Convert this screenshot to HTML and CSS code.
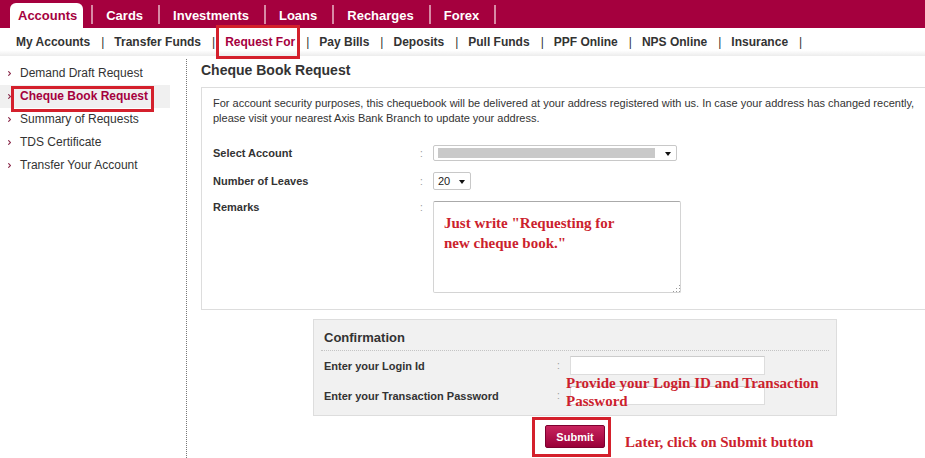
FILE: index.html
```html
<!DOCTYPE html>
<html>
<head>
<meta charset="utf-8">
<title>Cheque Book Request</title>
<link rel="stylesheet" href="styles.css">
</head>
<body>
<div class="topbar">
  <div class="tab active">Accounts</div>
  <div class="sep"></div>
  <div class="tab">Cards</div>
  <div class="sep"></div>
  <div class="tab">Investments</div>
  <div class="sep"></div>
  <div class="tab">Loans</div>
  <div class="sep"></div>
  <div class="tab">Recharges</div>
  <div class="sep"></div>
  <div class="tab">Forex</div>
  <div class="sep"></div>
</div>
<div class="subnav">
  <span class="sub">My Accounts</span><span class="bar">|</span>
  <span class="sub">Transfer Funds</span><span class="bar">|</span>
  <span class="sub current">Request For</span><span class="bar">|</span>
  <span class="sub">Pay Bills</span><span class="bar">|</span>
  <span class="sub">Deposits</span><span class="bar">|</span>
  <span class="sub">Pull Funds</span><span class="bar">|</span>
  <span class="sub">PPF Online</span><span class="bar">|</span>
  <span class="sub">NPS Online</span><span class="bar">|</span>
  <span class="sub">Insurance</span><span class="bar">|</span>
</div>
<div class="page">
  <ul class="side">
    <li class="side-item"><svg class="chev" width="3" height="5" viewBox="0 0 3 5"><path d="M0.3 0.3 L2.5 2.5 L0.3 4.7" fill="none" stroke="#8a2a4a" stroke-width="1.1"/></svg>Demand Draft Request</li>
    <li class="side-item on"><svg class="chev" width="3" height="5" viewBox="0 0 3 5"><path d="M0.3 0.3 L2.5 2.5 L0.3 4.7" fill="none" stroke="#8a2a4a" stroke-width="1.1"/></svg>Cheque Book Request</li>
    <li class="side-item"><svg class="chev" width="3" height="5" viewBox="0 0 3 5"><path d="M0.3 0.3 L2.5 2.5 L0.3 4.7" fill="none" stroke="#8a2a4a" stroke-width="1.1"/></svg>Summary of Requests</li>
    <li class="side-item"><svg class="chev" width="3" height="5" viewBox="0 0 3 5"><path d="M0.3 0.3 L2.5 2.5 L0.3 4.7" fill="none" stroke="#8a2a4a" stroke-width="1.1"/></svg>TDS Certificate</li>
    <li class="side-item"><svg class="chev" width="3" height="5" viewBox="0 0 3 5"><path d="M0.3 0.3 L2.5 2.5 L0.3 4.7" fill="none" stroke="#8a2a4a" stroke-width="1.1"/></svg>Transfer Your Account</li>
  </ul>
  <div class="main">
    <h1 class="title">Cheque Book Request</h1>
    <div class="box">
      <p class="note">For account security purposes, this chequebook will be delivered at your address registered with us. In case your address has changed recently, please visit your nearest Axis Bank Branch to update your address.</p>
      <div class="form">
        <div class="lbl">Select Account</div><div class="colon">:</div>
        <div class="sel sel-acc"><span class="masked"></span><span class="arrow"></span></div>
        <div class="lbl">Number of Leaves</div><div class="colon">:</div>
        <div class="sel sel-leaves"><span class="val">20</span><span class="arrow"></span></div>
        <div class="lbl top">Remarks</div><div class="colon top">:</div>
        <div class="ta-wrap">
          <textarea class="ta"></textarea>
          <div class="anno anno-ta">Just write "Requesting for<br>new cheque book."</div>
        </div>
      </div>
    </div>
    <div class="conf">
      <div class="conf-head">Confirmation</div>
      <div class="conf-form">
        <div class="lbl">Enter your Login Id</div><div class="colon">:</div><input class="inp" type="text">
        <div class="lbl">Enter your Transaction Password</div><div class="colon">:</div><input class="inp" type="password">
      </div>
      <div class="anno anno-login">Provide your Login ID and Transaction<br>Password</div>
    </div>
    <div class="submit-row">
      <span class="btn-wrap"><button class="btn" type="button">Submit</button><span class="anno anno-submit">Later, click on Submit button</span></span>
    </div>
  </div>
</div>
</body>
</html>
```
FILE: styles.css
```css
html, body {
  margin: 0;
  padding: 0;
}
body {
  width: 925px;
  height: 458px;
  overflow: hidden;
  background: #fff;
  font-family: "Liberation Sans", Arial, sans-serif;
  color: #333;
}
.topbar {
  height: 28px;
  background: #a5003e;
  display: flex;
  align-items: flex-end;
  padding-left: 10px;
}
.tab {
  height: 25px;
  line-height: 25px;
  font-size: 13px;
  font-weight: bold;
  color: #fff;
  padding: 0 15px 0 13px;
}
.tab.active {
  background: #fff;
  color: #a5003e;
  border-radius: 6px 6px 0 0;
  padding: 0 6px 0 8px;
  margin-right: 8px;
}
.sep {
  align-self: center;
  width: 2px;
  height: 19px;
  background: #d88aa5;
}
.subnav {
  height: 28px;
  display: flex;
  align-items: center;
  padding-left: 16px;
  font-size: 12px;
  font-weight: bold;
  color: #333;
  background: linear-gradient(#fff 0, #fff 80%, #ececec 100%);
}
.bar {
  margin: 0 10px 0 11px;
  font-weight: normal;
  color: #333;
}
.sub.current {
  position: relative;
  color: #a5003e;
}
.sub.current::after {
  content: "";
  position: absolute;
  left: -9px;
  right: -5px;
  top: -10px;
  bottom: -10px;
  border: 3px solid #d4202c;
}
.page {
  display: grid;
  grid-template-columns: 187px 748px;
  height: 402px;
}
.side {
  list-style: none;
  margin: 0;
  padding: 6px 0 0 0;
  border-right: 1px dotted #777;
  margin-top: 3px;
}
.side-item {
  height: 23px;
  line-height: 23px;
  font-size: 12px;
  color: #333;
  padding-left: 8px;
  display: flex;
  align-items: center;
  width: 162px;
}
.side-item:first-child {
  margin-top: -3px;
}
.chev {
  margin-right: 9px;
  flex: none;
}
.side-item.on {
  background: #f0f0f0;
  color: #a5003e;
  font-weight: bold;
  position: relative;
}
.side-item.on::after {
  content: "";
  position: absolute;
  left: 11px;
  top: 1px;
  width: 137px;
  height: 20px;
  border: 3px solid #d4202c;
}
.main {
  padding-left: 14px;
}
.title {
  margin: 5px 0 8px 0;
  font-size: 14px;
  line-height: 18px;
  font-weight: bold;
  color: #333;
}
.box {
  width: 748px;
  box-sizing: border-box;
  border: 1px solid #ddd;
  padding: 8px 11px 16px 11px;
}
.note {
  margin: 0;
  font-size: 11px;
  line-height: 15px;
  color: #333;
}
.form {
  margin-top: 19px;
  display: grid;
  grid-template-columns: 207px 13px auto;
  grid-template-rows: 16px 18px 92px;
  row-gap: 11px;
  align-items: center;
}
.lbl {
  font-size: 11px;
  font-weight: bold;
  color: #333;
}
.colon {
  font-size: 10px;
  color: #999;
}
.top {
  align-self: start;
  line-height: 13px;
}
.sel {
  box-sizing: border-box;
  border: 1px solid #c8c8c8;
  border-radius: 2px;
  background: #fff;
  display: flex;
  align-items: center;
  height: 100%;
}
.sel-acc {
  width: 244px;
}
.masked {
  margin-left: 4px;
  width: 217px;
  height: 10px;
  background: #c9c9c9;
}
.sel-leaves {
  width: 38px;
}
.val {
  font-size: 11px;
  margin-left: 4px;
  color: #222;
}
.arrow {
  margin-left: auto;
  margin-right: 5px;
  width: 0;
  height: 0;
  border-left: 3.5px solid transparent;
  border-right: 3.5px solid transparent;
  border-top: 4px solid #111;
  margin-top: 2px;
}
.ta-wrap {
  position: relative;
  width: 248px;
  height: 92px;
}
.ta {
  box-sizing: border-box;
  width: 248px;
  height: 92px;
  margin: 0;
  border: 1px solid #d4d4d4;
  border-top-color: #aaa;
  border-radius: 2px;
  display: block;
  resize: none;
  background: #fff;
}
.ta-wrap::after {
  content: "";
  position: absolute;
  right: 1px;
  bottom: 1px;
  width: 8px;
  height: 8px;
  background: radial-gradient(circle, #999 0.7px, transparent 0.9px) 0 0 / 3px 3px;
  clip-path: polygon(100% 0, 100% 100%, 0 100%);
}
.anno {
  position: absolute;
  font-family: "Liberation Serif", "Times New Roman", serif;
  font-weight: bold;
  color: #cc1f2e;
  white-space: nowrap;
}
.anno-ta {
  left: 11px;
  top: 12px;
  font-size: 15px;
  line-height: 20px;
}
.conf {
  position: relative;
  width: 524px;
  box-sizing: border-box;
  margin: 9px 0 0 112px;
  background: #f1f1f1;
  border: 1px solid #ddd;
  padding-bottom: 10px;
}
.conf-head {
  margin: 0 7px;
  padding: 9px 4px 3px 3px;
  font-size: 13px;
  line-height: 18px;
  font-weight: bold;
  color: #333;
  border-bottom: 1px dotted #c4c4c4;
}
.conf-form {
  padding: 5px 0 0 10px;
  display: grid;
  grid-template-columns: 233px 13px 195px;
  grid-template-rows: 19px 19px;
  row-gap: 11px;
  align-items: center;
}
.inp {
  box-sizing: border-box;
  width: 195px;
  height: 19px;
  margin: 0;
  border: 1px solid #ddd;
  border-top-color: #ccc;
  background: #fff;
}
.anno-login {
  left: 252px;
  top: 54px;
  font-size: 15px;
  line-height: 18px;
}
.submit-row {
  margin-top: 9px;
  width: 748px;
  display: flex;
  justify-content: center;
}
.btn-wrap {
  position: relative;
}
.btn-wrap::before {
  content: "";
  position: absolute;
  left: -13px;
  right: -6px;
  top: -8px;
  bottom: -9px;
  border: 3px solid #d4202c;
}
.btn {
  display: block;
  width: 60px;
  height: 23px;
  margin: 0;
  padding: 0;
  border: 1px solid #7d0030;
  border-radius: 2px;
  background: linear-gradient(#c8245e, #9a0038);
  color: #fff;
  font-family: "Liberation Sans", Arial, sans-serif;
  font-size: 11px;
  font-weight: bold;
}
.anno-submit {
  left: 80px;
  top: 8px;
  font-size: 15px;
  line-height: 18px;
}
```
